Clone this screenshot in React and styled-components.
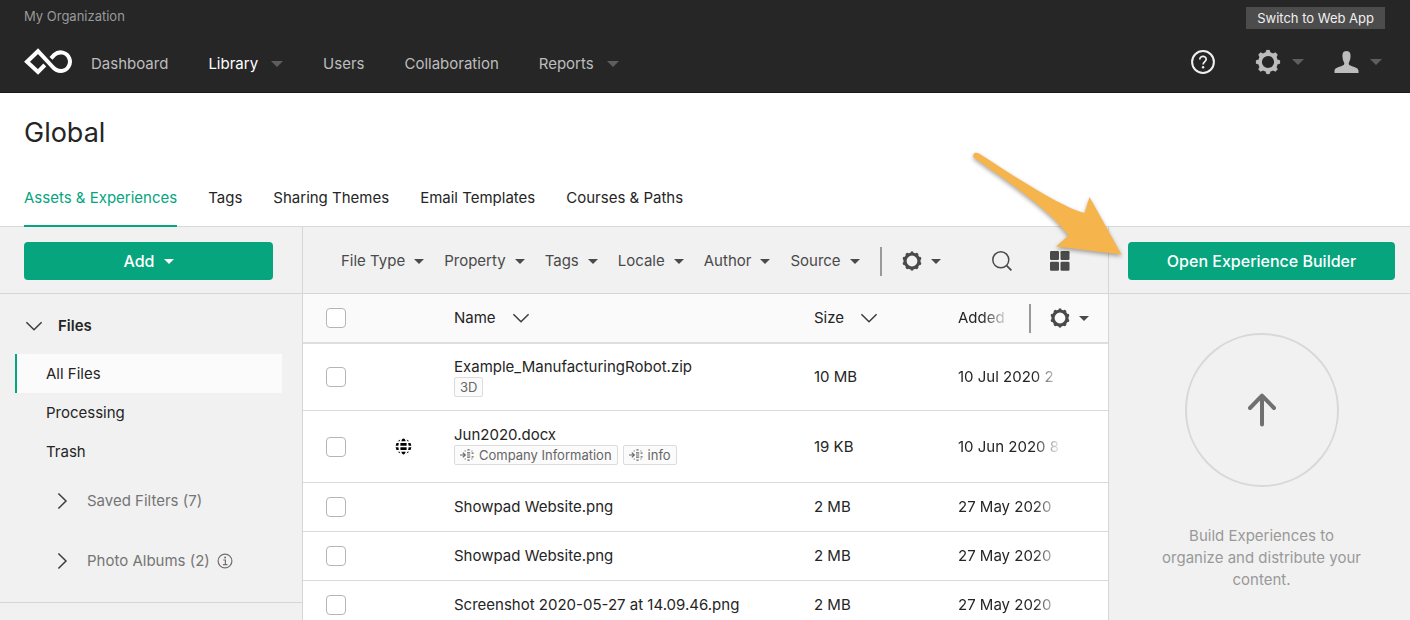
import React from 'react'
import styled, { createGlobalStyle } from 'styled-components'

const App = () => {
  return (
    <>
      <GlobalStyle />
      <TopBar>
        <TopRow>
          <span>My Organization</span>
          <SwitchButton type='button'>Switch to Web App</SwitchButton>
        </TopRow>
        <NavRow>
          <Logo />
          <NavLinks>
            {navItems.map((item) => (
              <NavLink key={item.label} href='#' $active={item.active}>
                {item.label}
                {item.menu && <Caret $size={6} $color='#5e5e5e' $gap={13} />}
              </NavLink>
            ))}
          </NavLinks>
          <NavIcons>
            <IconButton type='button' aria-label='Help'><HelpIcon /></IconButton>
            <IconButton type='button' aria-label='Settings'>
              <GearIcon />
              <Caret $size={6} $color='#5e5e5e' $gap={11} />
            </IconButton>
            <IconButton type='button' aria-label='Account'>
              <UserIcon />
              <Caret $size={6} $color='#5e5e5e' $gap={11} />
            </IconButton>
          </NavIcons>
        </NavRow>
      </TopBar>

      <PageHead>
        <h1>Global</h1>
        <Tabs>
          {tabs.map((tab, i) => (
            <Tab key={tab} href='#' $active={i === 0}>{tab}</Tab>
          ))}
        </Tabs>
      </PageHead>

      <Columns>
        <Sidebar>
          <PanelHead $left={24} $right={29}>
            <GreenButton type='button'>
              Add
              <Caret $size={5} $color='#fff' $gap={9} />
            </GreenButton>
          </PanelHead>
          <SideSection>
            <FilesToggle type='button'>
              <Chevron />
              Files
            </FilesToggle>
            {folders.map((name, i) => (
              <Folder key={name} href='#' $active={i === 0}>{name}</Folder>
            ))}
            <Group type='button'>
              <Chevron right />
              Saved Filters (7)
            </Group>
            <Group type='button'>
              <Chevron right />
              <span>Photo Albums (2)</span>
              <InfoIcon />
            </Group>
          </SideSection>
        </Sidebar>

        <Main>
          <PanelHead $left={38} $right={38}>
            <Filters>
              {filters.map((name) => (
                <Filter key={name} type='button'>
                  {name}
                  <Caret $size={5} $color='#4a4a4a' $gap={9} />
                </Filter>
              ))}
              <Divider />
              <Filter type='button' aria-label='Filter settings'>
                <CogIcon />
                <Caret $size={5} $color='#4a4a4a' $gap={9} />
              </Filter>
            </Filters>
            <ViewTools>
              <IconButton type='button' aria-label='Search'><SearchIcon /></IconButton>
              <IconButton type='button' aria-label='Grid view'><GridIcon /></IconButton>
            </ViewTools>
          </PanelHead>
          <FileTable>
            <colgroup>
              <col width='67' />
              <col width='84' />
              <col />
              <col width='144' />
              <col width='150' />
            </colgroup>
            <thead>
              <tr>
                <th><CheckBox type='checkbox' aria-label='Select all files' /></th>
                <th />
                <th><HeadLabel>Name <Chevron /></HeadLabel></th>
                <th><HeadLabel>Size <Chevron /></HeadLabel></th>
                <th>
                  <AddedHead>
                    <Fade $width={52}>Added</Fade>
                    <Divider />
                    <IconButton type='button' aria-label='Column settings'>
                      <CogIcon />
                      <Caret $size={5} $color='#4a4a4a' $gap={9} />
                    </IconButton>
                  </AddedHead>
                </th>
              </tr>
            </thead>
            <tbody>
              {files.map((file, i) => (
                <Row key={i} $height={file.height}>
                  <td><CheckBox type='checkbox' aria-label={'Select ' + file.name} /></td>
                  <td>{file.shared && <GlobeIcon />}</td>
                  <td>
                    <FileName>{file.name}</FileName>
                    {file.tags && (
                      <TagList $shared={file.shared}>
                        {file.tags.map((tag) => (
                          <TagChip key={tag}>
                            {file.shared && <TagIcon />}
                            {tag}
                          </TagChip>
                        ))}
                      </TagList>
                    )}
                  </td>
                  <td>{file.size}</td>
                  <td><Fade $width={104}>{file.added}</Fade></td>
                </Row>
              ))}
            </tbody>
          </FileTable>
        </Main>

        <Builder>
          <PanelHead $left={19} $right={15}>
            <GreenButton type='button'>Open Experience Builder</GreenButton>
          </PanelHead>
          <DropZone>
            <Circle><UpIcon /></Circle>
            <p>Build Experiences to organize and distribute your content.</p>
          </DropZone>
          <Pointer />
        </Builder>
      </Columns>
    </>
  )
}

const navItems = [
  { label: 'Dashboard' },
  { label: 'Library', active: true, menu: true },
  { label: 'Users' },
  { label: 'Collaboration' },
  { label: 'Reports', menu: true },
]
const tabs = ['Assets & Experiences', 'Tags', 'Sharing Themes', 'Email Templates', 'Courses & Paths']
const folders = ['All Files', 'Processing', 'Trash']
const filters = ['File Type', 'Property', 'Tags', 'Locale', 'Author', 'Source']
const files = [
  { name: 'Example_ManufacturingRobot.zip', tags: ['3D'], size: '10 MB', added: '10 Jul 2020 2', height: 67 },
  { name: 'Jun2020.docx', tags: ['Company Information', 'info'], shared: true, size: '19 KB', added: '10 Jun 2020 8', height: 72 },
  { name: 'Showpad Website.png', size: '2 MB', added: '27 May 2020', height: 49 },
  { name: 'Showpad Website.png', size: '2 MB', added: '27 May 2020', height: 49 },
  { name: 'Screenshot 2020-05-27 at 14.09.46.png', size: '2 MB', added: '27 May 2020', height: 49 },
]

const Logo = () => (
  <svg width='49' height='28' viewBox='0 0 49 28' fill='none' stroke='#fff' strokeWidth='4'>
    <path d='M20.8 17 L14 24 L3 13.8 L14 3.2 L28 18.2 C30 20.6 33 23 37 23 A9.3 9.3 0 1 0 30.4 6.8 L27 10.4' />
  </svg>
)

const HelpIcon = () => (
  <svg width='24' height='24' viewBox='0 0 24 24' fill='none' stroke='#f0f0f0' strokeWidth='2'>
    <circle cx='12' cy='12' r='10.9' />
    <path d='M8.8 9.4 C8.8 5.2 15.3 5.5 15.2 9.2 C15.1 11.6 12.1 11.6 12.1 14.5' strokeWidth='1.7' />
    <circle cx='12.1' cy='17.2' r='1.2' fill='#f0f0f0' stroke='none' />
  </svg>
)

const GearIcon = () => (
  <svg width='26' height='26' viewBox='0 0 26 26' fill='none' stroke='#bdbdbd'>
    <circle cx='13' cy='13' r='8' strokeWidth='3.8' />
    {[0, 45, 90, 135, 180, 225, 270, 315].map((deg) => (
      <path key={deg} d='M11 3.8 L11.6 1.4 H14.4 L15 3.8 Z' fill='#bdbdbd' strokeWidth='1' strokeLinejoin='round' transform={`rotate(${deg} 13 13)`} />
    ))}
  </svg>
)

const CogIcon = () => (
  <svg width='20' height='20' viewBox='0 0 20 20' fill='#4a4a4a'>
    <circle cx='10' cy='10' r='7' fill='none' stroke='#4a4a4a' strokeWidth='3.2' />
    {[0, 36, 72, 108, 144, 180, 216, 252, 288, 324].map((deg) => (
      <circle key={deg} cx='10' cy='1.9' r='1.6' transform={`rotate(${deg} 10 10)`} />
    ))}
  </svg>
)

const UserIcon = () => (
  <svg width='25' height='24' viewBox='0 0 25 24' fill='#bdbdbd'>
    <path d='M12.5 1 C8.8 1 8.2 4 8.5 7 C8.7 9.5 9.3 11.3 10.2 12.8 C10.7 14.8 9.5 15.4 7 16.2 C2.5 17.6 .5 18.4 .5 21 V23 H24.5 V21 C24.5 18.4 22.5 17.6 18 16.2 C15.5 15.4 14.3 14.8 14.8 12.8 C15.7 11.3 16.3 9.5 16.5 7 C16.8 4 16.2 1 12.5 1 Z' />
  </svg>
)

const Chevron = ({ right }) => (
  <svg width='18' height='18' viewBox='0 0 18 18' fill='none' stroke='#3c3c3c' strokeWidth='1.5'>
    <path d={right ? 'M5.4 1.5 L13 9 L5.4 16.5' : 'M1.4 5.2 L9 12.8 L16.6 5.2'} />
  </svg>
)

const InfoIcon = () => (
  <svg width='16' height='16' viewBox='0 0 16 16' fill='none' stroke='#707070' strokeWidth='1.2'>
    <circle cx='8' cy='8' r='6.9' />
    <path d='M6.2 7 H8.4 V11.5 M5.9 11.6 H10.5' />
    <circle cx='8.1' cy='4.5' r='1' fill='#707070' stroke='none' />
  </svg>
)

const SearchIcon = () => (
  <svg width='20' height='20' viewBox='0 0 20 20' fill='none' stroke='#4a4a4a' strokeWidth='1.5'>
    <circle cx='8.8' cy='8.8' r='8' />
    <path d='M14.4 14.4 L19.4 19.4' strokeWidth='1.8' />
  </svg>
)

const GridIcon = () => (
  <svg width='20' height='20' viewBox='0 0 20 20' fill='#4a4a4a'>
    <rect x='0' y='0' width='9' height='9' rx='1.2' />
    <rect x='10.5' y='0' width='9' height='9' rx='1.2' />
    <rect x='0' y='10.8' width='9' height='9' rx='1.2' />
    <rect x='10.5' y='10.8' width='9' height='9' rx='1.2' />
  </svg>
)

const GlobeIcon = () => (
  <svg width='17' height='17' viewBox='0 0 17 17' fill='#000'>
    <path d='M6.3 3.2 C6.9 1.2 7.6 .5 8.5 .5 S10.1 1.2 10.7 3.2 Z M6.3 13.8 C6.9 15.8 7.6 16.5 8.5 16.5 S10.1 15.8 10.7 13.8 Z' />
    <path d='M5.4 4.9 H11.6 V7.7 H5.4 Z M5.4 9.3 H11.6 V12.1 H5.4 Z' />
    <path d='M1.5 4.9 H3.8 L3.4 7.7 H.6 Z M.6 9.3 H3.4 L3.8 12.1 H1.5 Z M15.5 4.9 H13.2 L13.6 7.7 H16.4 Z M16.4 9.3 H13.6 L13.2 12.1 H15.5 Z' />
    <path d='M2.7 3.3 L5.3 1.4 L4.6 3.3 Z M14.3 3.3 L11.7 1.4 L12.4 3.3 Z M2.7 13.7 L5.3 15.6 L4.6 13.7 Z M14.3 13.7 L11.7 15.6 L12.4 13.7 Z' />
  </svg>
)

const TagIcon = () => (
  <svg width='14' height='12' viewBox='0 0 14 12' fill='none' stroke='#666' strokeWidth='1.2'>
    <path d='M0 6 H5 M2.8 3.6 L5.3 6 L2.8 8.4' />
    <path d='M7.4 .8 H9.6 M4.6 2 H5.8 M11.4 2 H12.4 M7 3.9 H10.2 M11.6 4.2 H13.6 M7 6 H10.2 M11.6 7.8 H13.6 M7 8.1 H10.2 M4.6 10 H5.8 M11.4 10 H12.4 M7.4 11.2 H9.6' />
  </svg>
)

const UpIcon = () => (
  <svg width='28' height='34' viewBox='0 0 28 34' fill='none' stroke='#707070' strokeWidth='4' strokeLinecap='round' strokeLinejoin='round'>
    <path d='M14 31.5 V3 M2 15 L14 2.6 L26 15' />
  </svg>
)

const Pointer = () => (
  <PointerSvg width='160' height='116' viewBox='0 0 160 116' aria-hidden='true'>
    <path d='M9 4.5 C6.5 3 4 3.5 3.4 5.5 C2.8 7.2 3.2 8.4 5 9.6 C32 29 77 58 98.5 86.5 L86 97.5 L151.5 105.5 L119.5 48 L114.5 64 C91 58 44 27 9 4.5 Z' fill='#f6b44d' />
  </PointerSvg>
)

const GlobalStyle = createGlobalStyle`
  *{
    box-sizing:border-box;
  }
  body{
    margin:0;
    background:#fff;
    color:#252525;
    font-family:Inter, "Liberation Sans", sans-serif;
    font-size:15px;
    line-height:20px;
    overflow:hidden;
  }
  button{
    font:inherit;
    color:inherit;
    background:none;
    border:none;
    padding:0;
    cursor:pointer;
  }
  a{
    color:inherit;
    text-decoration:none;
  }
  svg{
    display:block;
    flex-shrink:0;
  }
`

const TopBar = styled.header`
  background:#262626;
  color:#bdbdbd;
  padding:7px 28px 4px 24px;
  border-bottom:1px solid #1a1a1a;
`
const TopRow = styled.div`
  display:flex;
  justify-content:space-between;
  align-items:flex-start;
  margin-right:-3px;
  font-size:13px;
  line-height:18px;
  color:#999;
`
const SwitchButton = styled.button`
  background:#4c4c4c;
  color:#f0f0f0;
  padding:2px 11px;
`
const NavRow = styled.div`
  display:flex;
  align-items:center;
  height:59px;
  padding-top:7px;
`
const NavLinks = styled.nav`
  display:flex;
  gap:40px;
  flex:1;
  margin-left:18px;
  padding-top:3px;
`
const NavLink = styled.a`
  display:flex;
  align-items:center;
  color:${({ $active }) => ($active ? '#fff' : '#bdbdbd')};
`
const NavIcons = styled.div`
  display:flex;
  align-items:center;
  gap:30px;
  >:first-child{
    margin-right:10px;
  }
`
const IconButton = styled.button`
  display:flex;
  align-items:center;
`
const Caret = styled.span`
  border:${({ $size }) => $size}px solid transparent;
  border-top-color:${({ $color }) => $color};
  border-bottom:none;
  margin-left:${({ $gap }) => $gap}px;
`
const PageHead = styled.section`
  padding:23px 24px 0;
  border-bottom:1px solid #d9d9d9;
  h1{
    margin:0;
    font-size:27px;
    line-height:34px;
    font-weight:400;
  }
`
const Tabs = styled.nav`
  display:flex;
  gap:31px;
  margin:38px 0 -1px;
`
const Tab = styled.a`
  padding-bottom:17px;
  border-bottom:2px solid ${({ $active }) => ($active ? '#06a57e' : 'transparent')};
  color:${({ $active }) => ($active ? '#06a57e' : '#252525')};
`
const Columns = styled.div`
  display:grid;
  grid-template-columns:302px minmax(0, 1fr) 302px;
`
const Sidebar = styled.aside`
  background:#f1f1f1;
`
const Main = styled.main`
  border-left:1px solid #d6d6d6;
  background:#fff;
`
const Builder = styled.aside`
  position:relative;
  background:#f1f1f1;
  border-left:1px solid #d6d6d6;
`
const PanelHead = styled.div`
  display:flex;
  align-items:center;
  justify-content:space-between;
  height:67px;
  background:#f1f1f1;
  border-bottom:1px solid #d6d6d6;
  padding:2px ${({ $right }) => $right}px 0 ${({ $left }) => $left}px;
`
const GreenButton = styled.button`
  display:flex;
  align-items:center;
  justify-content:center;
  width:100%;
  height:38px;
  border-radius:4px;
  background:#06a57e;
  color:#fff;
  font-size:16px;
  font-weight:500;
`
const SideSection = styled.div`
  display:flex;
  flex-direction:column;
  padding:22px 20px 11px 15px;
  border-bottom:1px solid #d6d6d6;
`
const FilesToggle = styled.button`
  display:flex;
  align-items:center;
  gap:15px;
  padding-left:10px;
  margin-bottom:18px;
  font-weight:600;
`
const Folder = styled.a`
  padding:9px 0 9px 29px;
  border-left:2px solid ${({ $active }) => ($active ? '#06a57e' : 'transparent')};
  background:${({ $active }) => ($active ? '#fbfbfb' : 'transparent')};
  line-height:21px;
`
const Group = styled.button`
  display:flex;
  align-items:center;
  padding:20px 0 20px 38px;
  color:#757575;
  svg:first-child{
    margin-right:16px;
  }
  span + svg{
    margin-left:7px;
  }
`
const Filters = styled.div`
  display:flex;
  align-items:center;
  gap:20px;
`
const Filter = styled.button`
  display:flex;
  align-items:center;
  color:#4a4a4a;
`
const Divider = styled.span`
  width:2px;
  height:29px;
  background:#999;
`
const ViewTools = styled.div`
  display:flex;
  gap:38px;
`
const FileTable = styled.table`
  width:100%;
  table-layout:fixed;
  border-collapse:separate;
  border-spacing:0;
  th, td{
    padding:0;
    text-align:left;
    font-weight:400;
    border-bottom:1px solid #d9d9d9;
  }
  th{
    height:50px;
    background:#fafafa;
    border-bottom:2px solid #dedede;
  }
  th:first-child, td:first-child{
    padding-left:23px;
  }
  td:nth-child(2){
    padding-left:25px;
  }
`
const Row = styled.tr`
  height:${({ $height }) => $height}px;
`
const CheckBox = styled.input`
  appearance:none;
  display:block;
  width:20px;
  height:20px;
  margin:0;
  border:1px solid #b5b5b5;
  border-radius:4px;
  background:#fff;
`
const HeadLabel = styled.div`
  display:flex;
  align-items:center;
  gap:16px;
`
const AddedHead = styled.div`
  display:flex;
  align-items:center;
  >:nth-child(2){
    margin:0 19px;
  }
`
const Fade = styled.div`
  width:${({ $width }) => $width}px;
  white-space:nowrap;
  mask-image:linear-gradient(to right, #000 calc(100% - 28px), transparent);
`
const FileName = styled.div`
  white-space:nowrap;
`
const TagList = styled.div`
  display:flex;
  gap:5px;
  padding-bottom:${({ $shared }) => ($shared ? 4 : 0)}px;
`
const TagChip = styled.span`
  display:flex;
  align-items:center;
  gap:5px;
  padding:0 5px;
  border:1px solid #dcdcdc;
  border-radius:2px;
  background:#fbfbfb;
  color:#666;
  font-size:13px;
  line-height:18px;
`
const DropZone = styled.div`
  display:flex;
  flex-direction:column;
  align-items:center;
  padding:39px 46px 0 50px;
  color:#999;
  text-align:center;
  p{
    margin:38px 0 0;
    line-height:22px;
  }
`
const Circle = styled.div`
  display:flex;
  align-items:center;
  justify-content:center;
  width:154px;
  height:154px;
  border:2px solid #d8d8d8;
  border-radius:50%;
`
const PointerSvg = styled.svg`
  position:absolute;
  top:-78px;
  left:-139px;
  filter:drop-shadow(0 2px 2px rgba(0, 0, 0, .35));
`

export default App
